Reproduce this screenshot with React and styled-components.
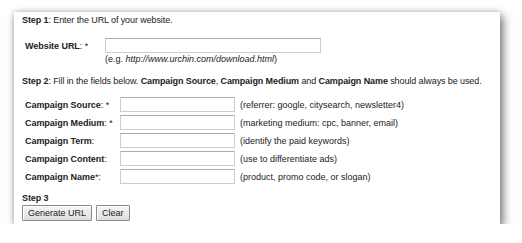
import styled, { createGlobalStyle } from 'styled-components';

const Global = createGlobalStyle`
  body {
    margin: 0;
    background: #fff;
    font-family: "Liberation Sans", Arial, sans-serif;
    font-size: 9px;
    color: #222;
  }
`;

const Page = styled.div`
  padding: 12px 0 0 14px;
`;

const Card = styled.div`
  width: 486px;
  height: 212px;
  box-sizing: border-box;
  background: #fff;
  padding: 2px 8px 0 8px;
  box-shadow: 3px 4px 9px rgba(0, 0, 0, 0.55), -1px -1px 5px rgba(0, 0, 0, 0.15);
`;

const Line = styled.div`
  line-height: 13px;
  margin-top: ${(p) => p.$top || 0}px;
  white-space: nowrap;
  letter-spacing: -0.1px;
`;

const UrlRow = styled.div`
  display: flex;
  align-items: center;
  margin-top: 11px;
  padding-left: 3px;
`;

const Label = styled.div`
  width: ${(p) => p.$w}px;
  flex: none;
  font-weight: bold;
  white-space: nowrap;
  letter-spacing: -0.05px;
  span {
    font-weight: normal;
  }
`;

const TextInput = styled.input`
  box-sizing: border-box;
  width: ${(p) => p.$w}px;
  height: 15px;
  margin: 0;
  padding: 0 2px;
  border: 1px solid #cdcdcd;
  border-top-color: #ababab;
  background: #fff;
  outline: none;
  font: inherit;
`;

const Hint = styled.div`
  padding-left: 83px;
  line-height: 12px;
  em {
    font-style: italic;
  }
`;

const Fields = styled.div`
  display: grid;
  grid-template-columns: 95px 115px auto;
  row-gap: 3px;
  align-items: center;
  margin-top: 9px;
  padding-left: 3px;
`;

const Help = styled.div`
  padding-left: 5px;
  white-space: nowrap;
`;

const Buttons = styled.div`
  display: flex;
  gap: 4px;
`;

const Button = styled.button`
  height: 16px;
  padding: 0 5px;
  margin: 0;
  font: inherit;
  color: #222;
  line-height: 12px;
  border: 1px solid #8a8a8a;
  border-radius: 1px;
  background: linear-gradient(#f6f6f6, #dedede);
  box-shadow: inset 1px 1px 0 #fff;
`;

const fields = [
  ['Campaign Source', ': *', '(referrer: google, citysearch, newsletter4)'],
  ['Campaign Medium', ': *', '(marketing medium: cpc, banner, email)'],
  ['Campaign Term', ':', '(identify the paid keywords)'],
  ['Campaign Content', ':', '(use to differentiate ads)'],
  ['Campaign Name', '*:', '(product, promo code, or slogan)'],
];

export default function App() {
  return (
    <Page>
      <Global />
      <Card>
        <Line>
          <b>Step 1</b>: Enter the URL of your website.
        </Line>
        <UrlRow>
          <Label $w={80}>
            Website URL<span>: *</span>
          </Label>
          <TextInput $w={216} />
        </UrlRow>
        <Hint>
          (e.g. <em>http://www.urchin.com/download.html</em>)
        </Hint>
        <Line $top={10}>
          <b>Step 2</b>: Fill in the fields below. <b>Campaign Source</b>, <b>Campaign Medium</b> and{' '}
          <b>Campaign Name</b> should always be used.
        </Line>
        <Fields>
          {fields.map(([name, suffix, help]) => (
            <>
              <Label key={name + 'l'} $w={95}>
                {name}
                <span>{suffix}</span>
              </Label>
              <TextInput key={name + 'i'} $w={115} />
              <Help key={name + 'h'}>{help}</Help>
            </>
          ))}
        </Fields>
        <Line $top={8}>
          <b>Step 3</b>
        </Line>
        <Buttons>
          <Button>Generate URL</Button>
          <Button>Clear</Button>
        </Buttons>
      </Card>
    </Page>
  );
}
